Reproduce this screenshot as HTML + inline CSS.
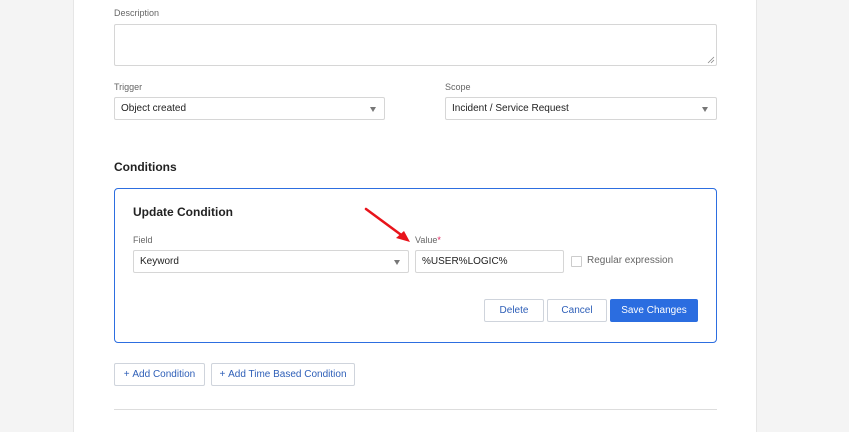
<!DOCTYPE html>
<html><head><style>
*{box-sizing:border-box;margin:0;padding:0}
body{width:849px;height:432px;background:#f4f4f4;font-family:"Liberation Sans",sans-serif;position:relative;overflow:hidden;color:#222}
.panel{position:absolute;left:73px;top:0;width:684px;height:432px;background:#fff;border-left:1px solid #e6e6e6;border-right:1px solid #e6e6e6}
.abs{position:absolute}
.lbl{font-size:9px;color:#666}
.box{position:absolute;border:1px solid #d6d6d6;border-radius:2px;background:#fff;font-size:10px;color:#222;padding-left:6px;display:flex;align-items:center}
.arr{position:absolute;right:8px;top:50%;margin-top:-2px;width:0;height:0;border-left:3px solid transparent;border-right:3px solid transparent;border-top:5px solid #777}
.btn{position:absolute;border:1px solid #cfd4dc;border-radius:2px;background:#fff;color:#2e5fb8;font-size:10px;display:flex;align-items:center;justify-content:center}
</style></head><body>
<div class="panel"></div>
<div class="abs lbl" style="left:114px;top:8px">Description</div>
<div class="box" style="left:114px;top:24px;width:603px;height:42px"></div>
<svg class="abs" style="left:707px;top:56px" width="8" height="8"><path d="M1 7L7 1M4 7L7 4" stroke="#888" stroke-width="0.8"/></svg>
<div class="abs lbl" style="left:114px;top:82px">Trigger</div>
<div class="box" style="left:114px;top:97px;width:271px;height:23px">Object created<span class="arr"></span></div>
<div class="abs lbl" style="left:445px;top:82px">Scope</div>
<div class="box" style="left:445px;top:97px;width:272px;height:23px">Incident / Service Request<span class="arr"></span></div>
<div class="abs" style="left:114px;top:160px;font-size:12px;font-weight:bold;color:#222">Conditions</div>
<div class="abs" style="left:114px;top:188px;width:603px;height:155px;border:1px solid #2d6ee0;border-radius:4px"></div>
<div class="abs" style="left:133px;top:205px;font-size:12px;font-weight:bold;color:#222">Update Condition</div>
<div class="abs lbl" style="left:133px;top:235px">Field</div>
<div class="box" style="left:133px;top:250px;width:276px;height:23px">Keyword<span class="arr"></span></div>
<div class="abs lbl" style="left:415px;top:235px">Value<span style="color:#e0245e">*</span></div>
<div class="box" style="left:415px;top:250px;width:149px;height:23px">%USER%LOGIC%</div>
<div class="abs" style="left:571px;top:256px;width:11px;height:11px;border:1px solid #ccc;border-radius:1px"></div>
<div class="abs" style="left:587px;top:255px;font-size:10px;color:#666">Regular expression</div>
<div class="btn" style="left:484px;top:299px;width:60px;height:23px">Delete</div>
<div class="btn" style="left:547px;top:299px;width:60px;height:23px">Cancel</div>
<div class="btn" style="left:610px;top:299px;width:88px;height:23px;background:#2b6de0;border-color:#2b6de0;color:#fff">Save Changes</div>
<svg class="abs" style="left:360px;top:205px" width="56" height="40"><line x1="6" y1="4" x2="44" y2="32" stroke="#e8141b" stroke-width="2.5" stroke-linecap="round"/><path d="M50 37L36 33L44 26Z" fill="#e8141b"/></svg>
<div class="btn" style="left:114px;top:363px;width:91px;height:23px">+&nbsp;Add Condition</div>
<div class="btn" style="left:211px;top:363px;width:144px;height:23px">+&nbsp;Add Time Based Condition</div>
<div class="abs" style="left:114px;top:409px;width:603px;height:1px;background:#ddd"></div>
</body></html>
